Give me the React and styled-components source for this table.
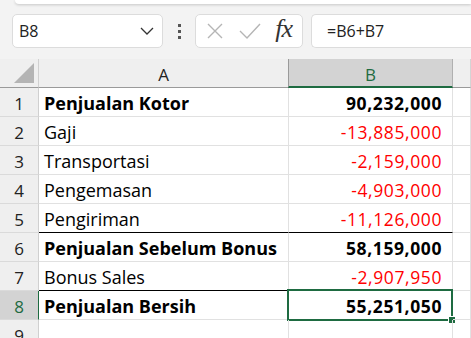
import React from 'react'
import styled, { createGlobalStyle } from 'styled-components'

const GlobalStyle = createGlobalStyle`
  html, body {
    margin: 0;
    padding: 0;
    background: #f3f3f3;
    overflow: hidden;
  }
  body {
    font-family: 'Open Sans', 'Noto Sans', sans-serif;
  }
`

const rows = [
  { label: 'Penjualan Kotor', value: '90,232,000', bold: true },
  { label: 'Gaji', value: '-13,885,000', negative: true },
  { label: 'Transportasi', value: '-2,159,000', negative: true },
  { label: 'Pengemasan', value: '-4,903,000', negative: true },
  { label: 'Pengiriman', value: '-11,126,000', negative: true, rule: true },
  { label: 'Penjualan Sebelum Bonus', value: '58,159,000', bold: true },
  { label: 'Bonus Sales', value: '-2,907,950', negative: true, rule: true },
  { label: 'Penjualan Bersih', value: '55,251,050', bold: true, selected: true },
  { label: '', value: '' },
]

export default function App() {
  return (
    <Page>
      <GlobalStyle />
      <RibbonEdge />
      <FormulaBar>
        <NameBox>
          <span>B8</span>
          <svg width="14" height="8" viewBox="0 0 14 8">
            <path d="M1 1 L7 7 L13 1" fill="none" stroke="#333" strokeWidth="1.3" />
          </svg>
        </NameBox>
        <Dots>
          <i />
          <i />
          <i />
        </Dots>
        <FxBox>
          <svg width="18" height="18" viewBox="0 0 18 18">
            <path d="M2 2 L16 16 M16 2 L2 16" stroke="#b5b5b5" strokeWidth="1.4" />
          </svg>
          <svg width="22" height="16" viewBox="0 0 22 16">
            <path d="M1 8 L8 15 L21 1" fill="none" stroke="#b5b5b5" strokeWidth="1.4" />
          </svg>
          <FxLabel>fx</FxLabel>
        </FxBox>
        <FormulaInput>=B6+B7</FormulaInput>
      </FormulaBar>

      <Sheet>
        <Corner>
          <svg width="22" height="22" viewBox="0 0 22 22">
            <path d="M21 1 L21 21 L1 21 Z" fill="#b4b4b4" />
          </svg>
        </Corner>
        <ColHead>A</ColHead>
        <ColHead $active>B</ColHead>
        <ColHead />

        {rows.map((r, i) => (
          <React.Fragment key={i}>
            <RowHead $active={r.selected}>{i + 1}</RowHead>
            <Cell $bold={r.bold} $rule={r.rule}>
              {r.label}
            </Cell>
            <Cell $num $bold={r.bold} $negative={r.negative} $rule={r.rule}>
              {r.value}
              {r.selected && (
                <Selection>
                  <Handle />
                </Selection>
              )}
            </Cell>
            <Cell />
          </React.Fragment>
        ))}
      </Sheet>
    </Page>
  )
}

const Page = styled.div`
  width: 471px;
  height: 338px;
  overflow: hidden;
  position: relative;
`

const RibbonEdge = styled.div`
  height: 4px;
  margin-left: 15px;
  background: #fff;
  border-bottom-left-radius: 6px;
  box-shadow: 0 1px 3px rgba(0, 0, 0, 0.18);
`

const FormulaBar = styled.div`
  display: flex;
  align-items: center;
  height: 34px;
  margin-top: 10px;
  padding-left: 12px;
  font-family: 'Open Sans', 'Noto Sans', sans-serif;
`

const Box = styled.div`
  height: 34px;
  box-sizing: border-box;
  background: #fff;
  border: 1px solid #dcdcdc;
  border-radius: 5px;
  display: flex;
  align-items: center;
`

const NameBox = styled(Box)`
  width: 151px;
  padding: 0 8px 0 6px;
  justify-content: space-between;
  font-size: 16px;
  color: #222;
`

const Dots = styled.div`
  width: 32px;
  display: flex;
  flex-direction: column;
  align-items: center;
  gap: 3px;

  i {
    width: 3px;
    height: 3px;
    background: #555;
  }
`

const FxBox = styled(Box)`
  width: 108px;
  padding: 0 6px 0 10px;
  gap: 12px;
  justify-content: space-between;
`

const FxLabel = styled.span`
  font-family: 'Liberation Serif', 'DejaVu Serif', serif;
  font-style: italic;
  font-size: 26px;
  line-height: 1;
  color: #333;
  letter-spacing: -1px;
  margin-right: 4px;
  margin-top: -4px;
`

const FormulaInput = styled(Box)`
  flex: 1;
  margin-left: 8px;
  padding-left: 15px;
  border-right: none;
  border-top-right-radius: 0;
  border-bottom-right-radius: 0;
  font-size: 16px;
  color: #222;
`

const Sheet = styled.div`
  display: grid;
  grid-template-columns: 39px 250px 164px 1fr;
  grid-auto-rows: 29px;
  margin-top: 11px;
  background: #fff;
`

const Corner = styled.div`
  background: #efefef;
  border-bottom: 1px solid #9a9a9a;
  border-right: 1px solid #d0d0d0;
  display: flex;
  align-items: flex-end;
  justify-content: flex-end;
  padding: 0 3px 3px 0;
  box-sizing: border-box;
`

const ColHead = styled.div`
  box-sizing: border-box;
  display: flex;
  align-items: center;
  justify-content: center;
  font-size: 17px;
  color: ${({ $active }) => ($active ? '#1e6b41' : '#222')};
  background: ${({ $active }) => ($active ? '#d3d3d3' : '#efefef')};
  border-right: 1px solid ${({ $active }) => ($active ? '#b0b0b0' : '#d4d4d4')};
  border-left: ${({ $active }) => ($active ? '1px solid #9a9a9a' : 'none')};
  border-bottom: ${({ $active }) => ($active ? '2px solid #1e6b41' : '1px solid #9a9a9a')};
  padding-top: 3px;
  margin-left: ${({ $active }) => ($active ? '-1px' : '0')};
`

const RowHead = styled.div`
  box-sizing: border-box;
  display: flex;
  align-items: center;
  justify-content: center;
  font-size: 17px;
  padding-top: 2px;
  color: ${({ $active }) => ($active ? '#1e6b41' : '#222')};
  background: ${({ $active }) => ($active ? '#d3d3d3' : '#efefef')};
  border-bottom: 1px solid #dadada;
  border-right: 1px solid ${({ $active }) => ($active ? '#1e6b41' : '#d0d0d0')};
`

const Cell = styled.div`
  position: relative;
  box-sizing: border-box;
  display: flex;
  align-items: center;
  justify-content: ${({ $num }) => ($num ? 'flex-end' : 'flex-start')};
  padding: 2px ${({ $num }) => ($num ? '10px' : '0')} 0 ${({ $num }) => ($num ? '0' : '5px')};
  font-size: ${({ $num }) => ($num ? '17.5px' : '18px')};
  letter-spacing: ${({ $num }) => ($num ? '0.6px' : '0')};
  font-weight: ${({ $bold }) => ($bold ? 700 : 400)};
  color: ${({ $negative }) => ($negative ? '#ff0000' : '#000')};
  white-space: nowrap;
  border-right: 1px solid #e1e1e1;
  border-bottom: 1px solid ${({ $rule }) => ($rule ? '#000' : '#e1e1e1')};
`

const Selection = styled.div`
  position: absolute;
  left: -2px;
  top: -2px;
  right: -1px;
  bottom: -2px;
  border: 2px solid #1e6b41;
  pointer-events: none;
`

const Handle = styled.div`
  position: absolute;
  right: -5px;
  bottom: -5px;
  width: 6px;
  height: 6px;
  background: #1e6b41;
  border: 1px solid #fff;
`
